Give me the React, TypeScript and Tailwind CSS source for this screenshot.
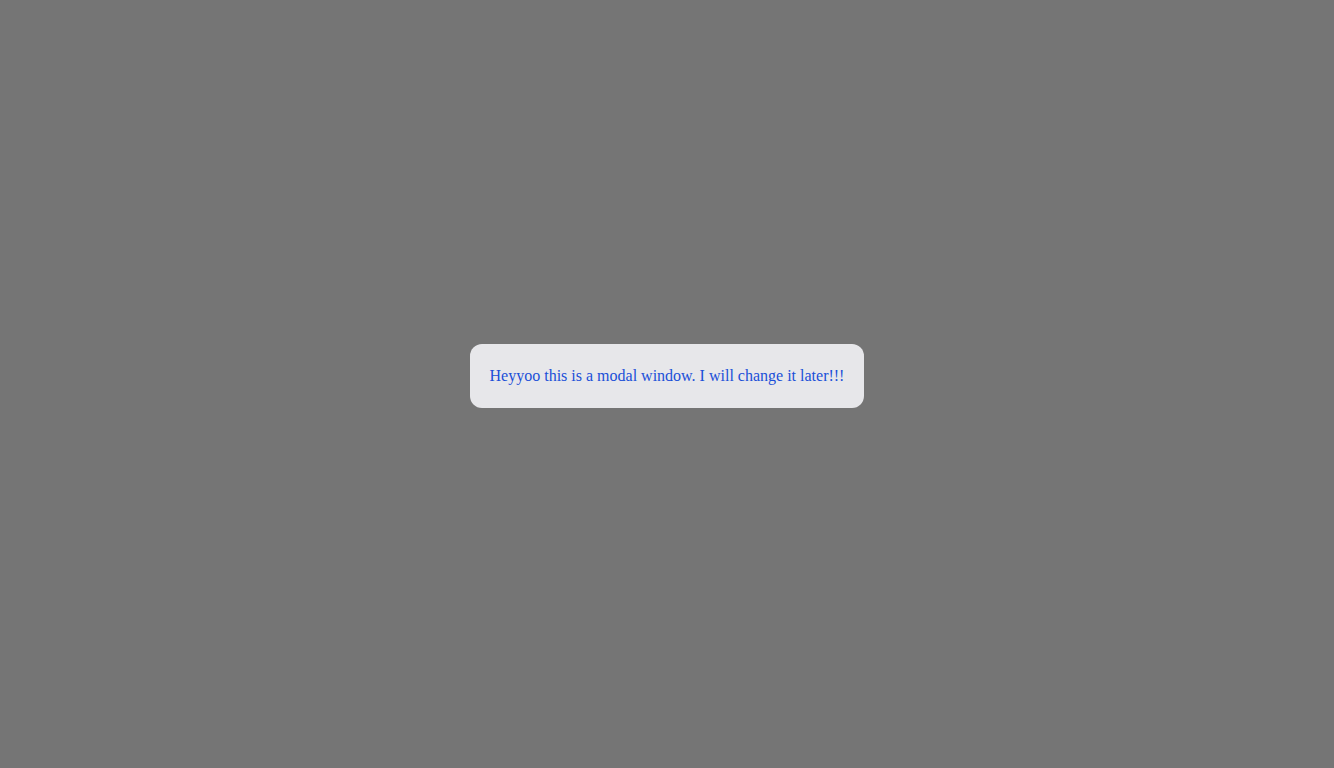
const App = () => {
  return (
    <div className="fixed inset-0 bg-[#757575] flex items-center justify-center">
      {/* Modal */}
      <div className="bg-[#e7e7ea] rounded-xl px-5 py-5 mb-4">
        <p className="text-base leading-6 text-[#1a4fd8] font-['Liberation_Serif',serif]">
          Heyyoo this is a modal window. I will change it later!!!
        </p>
      </div>
    </div>
  );
};

export default App;
